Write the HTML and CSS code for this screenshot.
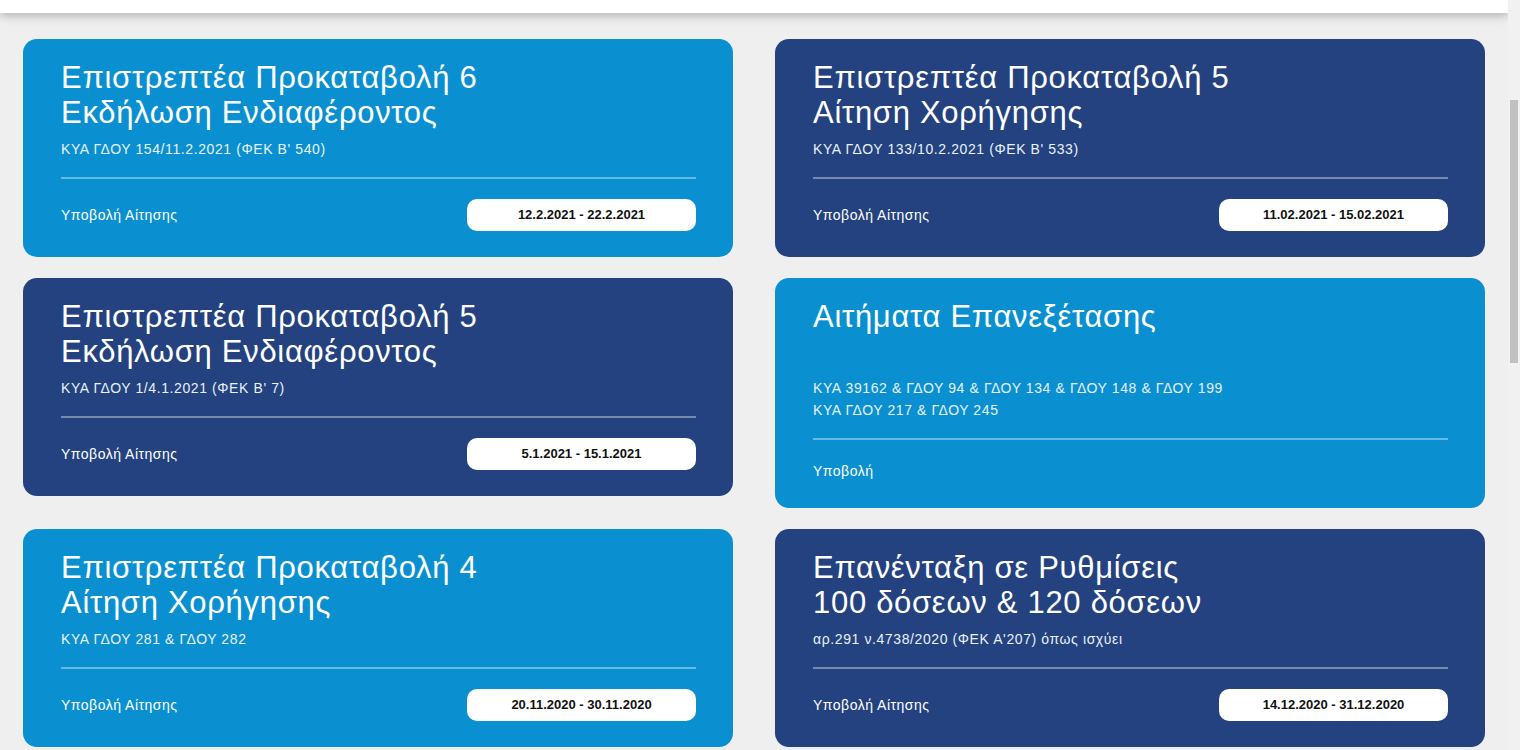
FILE: index.html
```html
<!DOCTYPE html>
<html>
	<head>
		<meta charset="utf-8" />
		<title>Επιστρεπτέα Προκαταβολή</title>
		<link rel="stylesheet" href="styles.css">
	</head>
	<body>
		<div class="page">
			<div class="main">
				<header class="topbar"></header>
				<section class="cards">
					<div class="card light">
						<h2 class="title">Επιστρεπτέα Προκαταβολή 6<br>Εκδήλωση Ενδιαφέροντος</h2>
						<p class="law">ΚΥΑ ΓΔΟΥ 154/11.2.2021 (ΦΕΚ Β' 540)</p>
						<div class="foot">
							<span>Υποβολή Αίτησης</span>
							<span class="date">12.2.2021 - 22.2.2021</span>
						</div>
					</div>
					<div class="card dark">
						<h2 class="title">Επιστρεπτέα Προκαταβολή 5<br>Αίτηση Χορήγησης</h2>
						<p class="law">ΚΥΑ ΓΔΟΥ 133/10.2.2021 (ΦΕΚ Β' 533)</p>
						<div class="foot">
							<span>Υποβολή Αίτησης</span>
							<span class="date">11.02.2021 - 15.02.2021</span>
						</div>
					</div>
					<div class="card dark">
						<h2 class="title">Επιστρεπτέα Προκαταβολή 5<br>Εκδήλωση Ενδιαφέροντος</h2>
						<p class="law">ΚΥΑ ΓΔΟΥ 1/4.1.2021 (ΦΕΚ Β' 7)</p>
						<div class="foot">
							<span>Υποβολή Αίτησης</span>
							<span class="date">5.1.2021 - 15.1.2021</span>
						</div>
					</div>
					<div class="card light">
						<h2 class="title">Αιτήματα Επανεξέτασης</h2>
						<p class="law">ΚΥΑ 39162 &amp; ΓΔΟΥ 94 &amp; ΓΔΟΥ 134 &amp; ΓΔΟΥ 148 &amp; ΓΔΟΥ 199<br>ΚΥΑ ΓΔΟΥ 217 &amp; ΓΔΟΥ 245</p>
						<div class="foot">
							<span>Υποβολή</span>
						</div>
					</div>
					<div class="card light">
						<h2 class="title">Επιστρεπτέα Προκαταβολή 4<br>Αίτηση Χορήγησης</h2>
						<p class="law">ΚΥΑ ΓΔΟΥ 281 &amp; ΓΔΟΥ 282</p>
						<div class="foot">
							<span>Υποβολή Αίτησης</span>
							<span class="date">20.11.2020 - 30.11.2020</span>
						</div>
					</div>
					<div class="card dark">
						<h2 class="title">Επανένταξη σε Ρυθμίσεις<br>100 δόσεων &amp; 120 δόσεων</h2>
						<p class="law">αρ.291 ν.4738/2020 (ΦΕΚ Α'207) όπως ισχύει</p>
						<div class="foot">
							<span>Υποβολή Αίτησης</span>
							<span class="date">14.12.2020 - 31.12.2020</span>
						</div>
					</div>
				</section>
			</div>
			<div class="scrollbar"><div class="thumb"></div></div>
		</div>
	</body>
</html>
```

FILE: styles.css
```css
body,h2,p{margin: 0;padding: 0;}
body{background: #efefef;font-family: "Liberation Sans", Arial, sans-serif;overflow: hidden;height: 750px;}

.page{display: flex;height: 750px;}
.main{flex: 1;}
.topbar{height: 13px;background: #fff;box-shadow: 0 3px 10px rgba(0,0,0,0.25);}
.cards{display: grid;grid-template-columns: 710px 710px;column-gap: 42px;row-gap: 21px;align-items: start;padding: 26px 23px 0;}

.card{border-radius: 14px;padding: 21px 37px 26px 38px;color: #fff;}
.card.light{background: #0a90d1;}
.card.dark{background: #23427f;}

.title{font-size: 31px;font-weight: normal;letter-spacing: 0.7px;line-height: 35px;min-height: 70px;}
.law{font-size: 14px;letter-spacing: 0.6px;line-height: 22px;margin-top: 8px;color: #e8f1f8;}
.foot{display: flex;justify-content: space-between;align-items: center;border-top: 2px solid rgba(255,255,255,0.38);margin-top: 17px;padding-top: 20px;font-size: 14px;letter-spacing: 0.5px;min-height: 22px;}
.date{width: 229px;height: 32px;line-height: 32px;background: #fff;border-radius: 10px;color: #111;font-weight: bold;text-align: center;font-size: 13px;letter-spacing: 0;}

.scrollbar{width: 12px;background: #f1f1f1;padding-top: 100px;}
.thumb{width: 8px;height: 263px;margin-left: 2px;background: #c1c1c1;}
```
